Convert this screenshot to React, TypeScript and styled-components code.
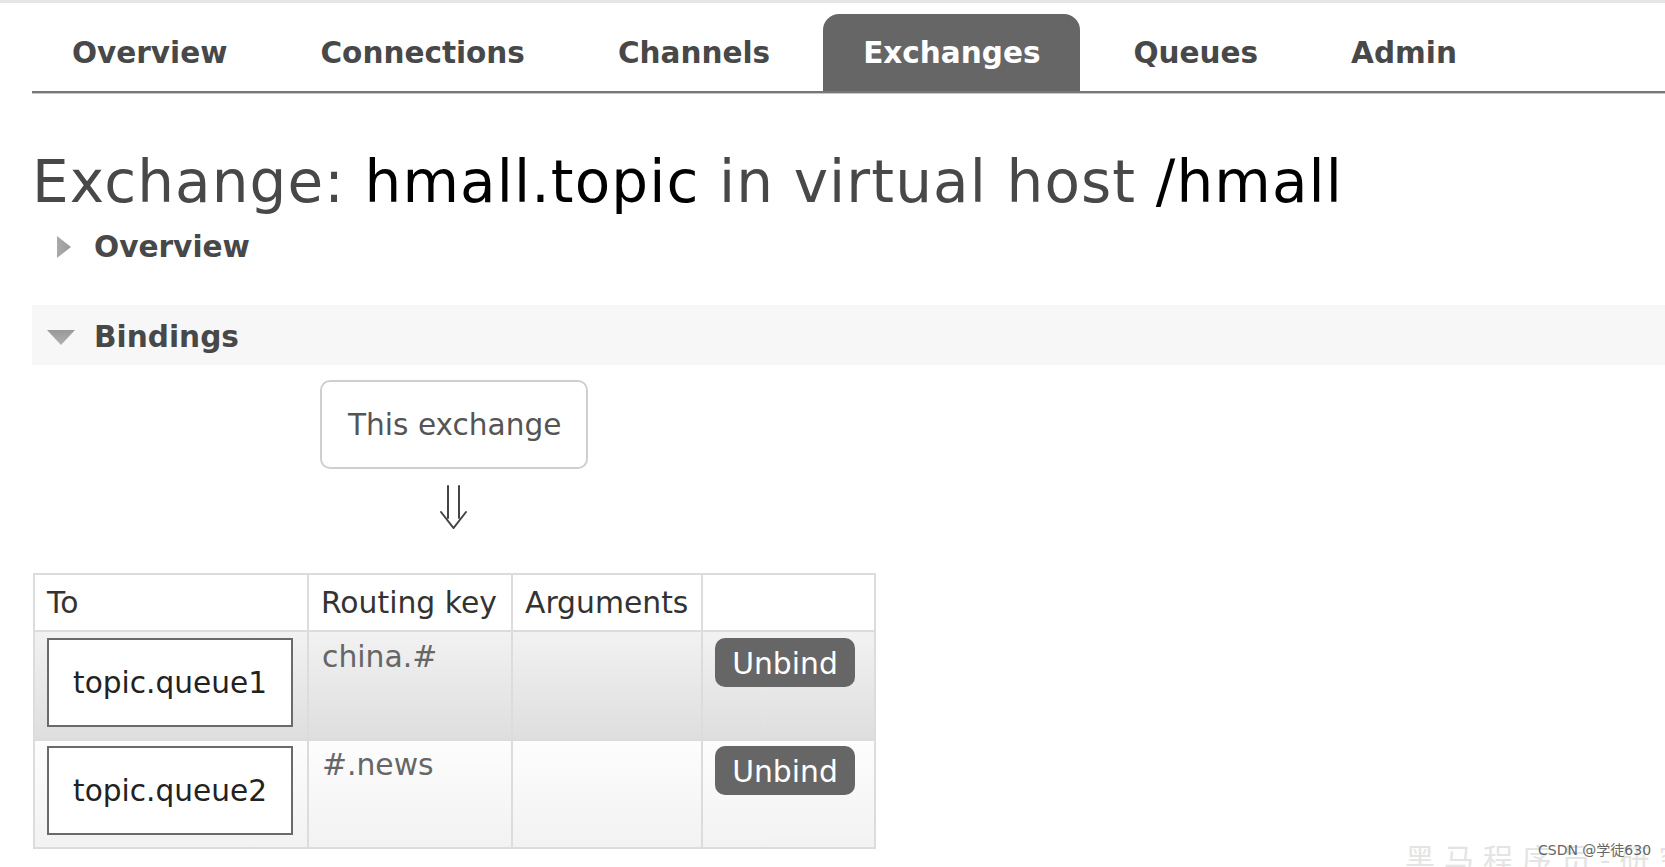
import React from "react";
import styled, { createGlobalStyle } from "styled-components";

const GlobalStyle = createGlobalStyle`
  html, body { margin: 0; padding: 0; background: #fff; }
  body { font-family: "DejaVu Sans", Verdana, sans-serif; color: #484848; }
  * { box-sizing: border-box; }
`;

const Page = styled.div`
  position: relative;
  width: 1665px;
  height: 867px;
  overflow: hidden;
  border-top: 3px solid #e6e6e6;
  padding-left: 32px;
`;

const Nav = styled.ul`
  display: flex;
  gap: 13px;
  margin: 0;
  padding: 11px 0 0 0;
  list-style: none;
  border-bottom: 2px solid #777;
  box-shadow: 0 1px 0 #c8c8c8;
`;

const NavItem = styled.li<{ $active?: boolean }>`
  height: 77px;
  display: flex;
  align-items: center;
  padding: 1px 40px 0;
  font-size: 29.5px;
  font-weight: bold;
  color: ${(p) => (p.$active ? "#fff" : "#484848")};
  background: ${(p) => (p.$active ? "#666" : "transparent")};
  border-radius: 16px 16px 0 0;
`;

const Title = styled.h1`
  margin: 55px 0 0 0;
  font-size: 58px;
  line-height: 68px;
  font-weight: normal;
  letter-spacing: 1.12px;
  color: #484848;
  white-space: nowrap;
`;

const Strong = styled.span`
  color: #000;
`;

const SectionHeader = styled.h2<{ $open?: boolean }>`
  display: flex;
  align-items: center;
  margin: ${(p) => (p.$open ? "40px 0 0 0" : "13px 0 0 0")};
  padding: ${(p) => (p.$open ? "14px 0 10px 15px" : "0 0 0 15px")};
  background: ${(p) => (p.$open ? "#f7f7f7" : "transparent")};
  font-size: 29.6px;
  line-height: 36px;
  font-weight: bold;
  color: #484848;
`;

const IconSlot = styled.span<{ $offset: number }>`
  display: flex;
  align-items: center;
  width: 47px;
  height: 36px;
  padding-left: ${(p) => p.$offset}px;
`;

const Diagram = styled.div`
  display: inline-flex;
  flex-direction: column;
  align-items: center;
  margin: 15px 0 0 288px;
`;

const ExchangeBox = styled.div`
  display: flex;
  align-items: center;
  height: 89px;
  padding: 0 25px 0 26px;
  border: 2px solid #cfcfcf;
  border-radius: 10px;
  font-size: 29.6px;
  color: #555;
`;

const ArrowWrap = styled.div`
  margin-top: 16px;
  height: 44px;
`;

const Table = styled.table`
  margin: 44px 0 0 1px;
  width: 841px;
  table-layout: fixed;
  border-collapse: collapse;
  border: 2px solid #dcdcdc;
  font-size: 29.8px;
`;

const Th = styled.th`
  height: 57px;
  padding: 0 12px;
  text-align: left;
  font-weight: normal;
  color: #333;
  border: 2px solid #dcdcdc;
  background: #fff;
  vertical-align: middle;
  white-space: nowrap;
`;

const Tr = styled.tr<{ $alt?: boolean }>`
  background: ${(p) =>
    p.$alt
      ? "linear-gradient(#f2f2f2, #dedede)"
      : "linear-gradient(#fdfdfd, #f2f2f2)"};
`;

const Td = styled.td<{ $pt: number; $pl?: number }>`
  padding: ${(p) => `${p.$pt}px 12px 12px ${p.$pl ?? 12}px`};
  vertical-align: top;
  border: 2px solid #dcdcdc;
  color: #666;
  line-height: 34px;
`;

const QueueBox = styled.div`
  display: flex;
  align-items: center;
  justify-content: center;
  width: 246px;
  height: 89px;
  border: 2px solid #6a6a6a;
  background: #fff;
  color: #222;
  font-size: 29.6px;
`;

const UnbindButton = styled.button`
  display: block;
  width: 140px;
  height: 49px;
  padding: 2px 0 0;
  border: none;
  border-radius: 10px;
  background: #666;
  color: #fff;
  font-family: "DejaVu Sans", Verdana, sans-serif;
  font-size: 29.8px;
  line-height: 47px;
  cursor: pointer;
`;

const Watermark = styled.div`
  position: absolute;
  left: 1405px;
  top: 832px;
  font-family: "Noto Sans CJK SC", sans-serif;
  font-size: 30px;
  letter-spacing: 9px;
  color: #e4e4e4;
  white-space: nowrap;
`;

const Credit = styled.div`
  position: absolute;
  left: 1538px;
  top: 836px;
  font-family: "DejaVu Sans", "Noto Sans CJK SC", sans-serif;
  font-size: 14px;
  color: #666;
  white-space: nowrap;
`;

const RightTriangle = () => (
  <svg width="16" height="24" viewBox="0 0 16 24">
    <defs>
      <linearGradient id="gr" x1="0" y1="0" x2="1" y2="0">
        <stop offset="0" stopColor="#aaa" />
        <stop offset="1" stopColor="#999" />
      </linearGradient>
    </defs>
    <polygon points="1,1 15,12 1,23" fill="url(#gr)" />
  </svg>
);

const DownTriangle = () => (
  <svg width="28" height="17" viewBox="0 0 28 17">
    <defs>
      <linearGradient id="gd" x1="0" y1="0" x2="0" y2="1">
        <stop offset="0" stopColor="#999" />
        <stop offset="1" stopColor="#b0b0b0" />
      </linearGradient>
    </defs>
    <polygon points="0,1 28,1 14,16" fill="url(#gd)" />
  </svg>
);

const DoubleArrow = () => (
  <svg width="32" height="44" viewBox="0 0 32 44">
    <g fill="none" stroke="#444" strokeWidth="2" strokeLinecap="round">
      <line x1="10" y1="1" x2="10" y2="33" />
      <line x1="21" y1="1" x2="21" y2="33" />
      <polyline points="3,27 15.5,43 28,27" />
    </g>
  </svg>
);

const tabs = ["Overview", "Connections", "Channels", "Exchanges", "Queues", "Admin"];

const bindings = [
  { queue: "topic.queue1", key: "china.#", pt: 6 },
  { queue: "topic.queue2", key: "#.news", pt: 5 },
];

export default function App() {
  return (
    <>
      <GlobalStyle />
      <Page>
        <Nav>
          {tabs.map((t) => (
            <NavItem key={t} $active={t === "Exchanges"}>
              {t}
            </NavItem>
          ))}
        </Nav>

        <Title>
          Exchange: <Strong>hmall.topic</Strong> in virtual host <Strong>/hmall</Strong>
        </Title>

        <SectionHeader>
          <IconSlot $offset={9}>
            <RightTriangle />
          </IconSlot>
          Overview
        </SectionHeader>

        <SectionHeader $open>
          <IconSlot $offset={0}>
            <DownTriangle />
          </IconSlot>
          Bindings
        </SectionHeader>

        <Diagram>
          <ExchangeBox>This exchange</ExchangeBox>
          <ArrowWrap>
            <DoubleArrow />
          </ArrowWrap>
        </Diagram>

        <Table>
          <colgroup>
            <col style={{ width: 274 }} />
            <col style={{ width: 204 }} />
            <col style={{ width: 190 }} />
            <col style={{ width: 173 }} />
          </colgroup>
          <thead>
            <tr>
              <Th>To</Th>
              <Th>Routing key</Th>
              <Th>Arguments</Th>
              <Th></Th>
            </tr>
          </thead>
          <tbody>
            {bindings.map((b, i) => (
              <Tr key={b.queue} $alt={i === 0}>
                <Td $pt={b.pt}>
                  <QueueBox>{b.queue}</QueueBox>
                </Td>
                <Td $pt={b.pt + 2} $pl={13}>{b.key}</Td>
                <Td $pt={b.pt + 2}></Td>
                <Td $pt={b.pt}>
                  <UnbindButton>Unbind</UnbindButton>
                </Td>
              </Tr>
            ))}
          </tbody>
        </Table>

        <Watermark>黑马程序员-研究院</Watermark>
        <Credit>CSDN @学徒630</Credit>
      </Page>
    </>
  );
}
